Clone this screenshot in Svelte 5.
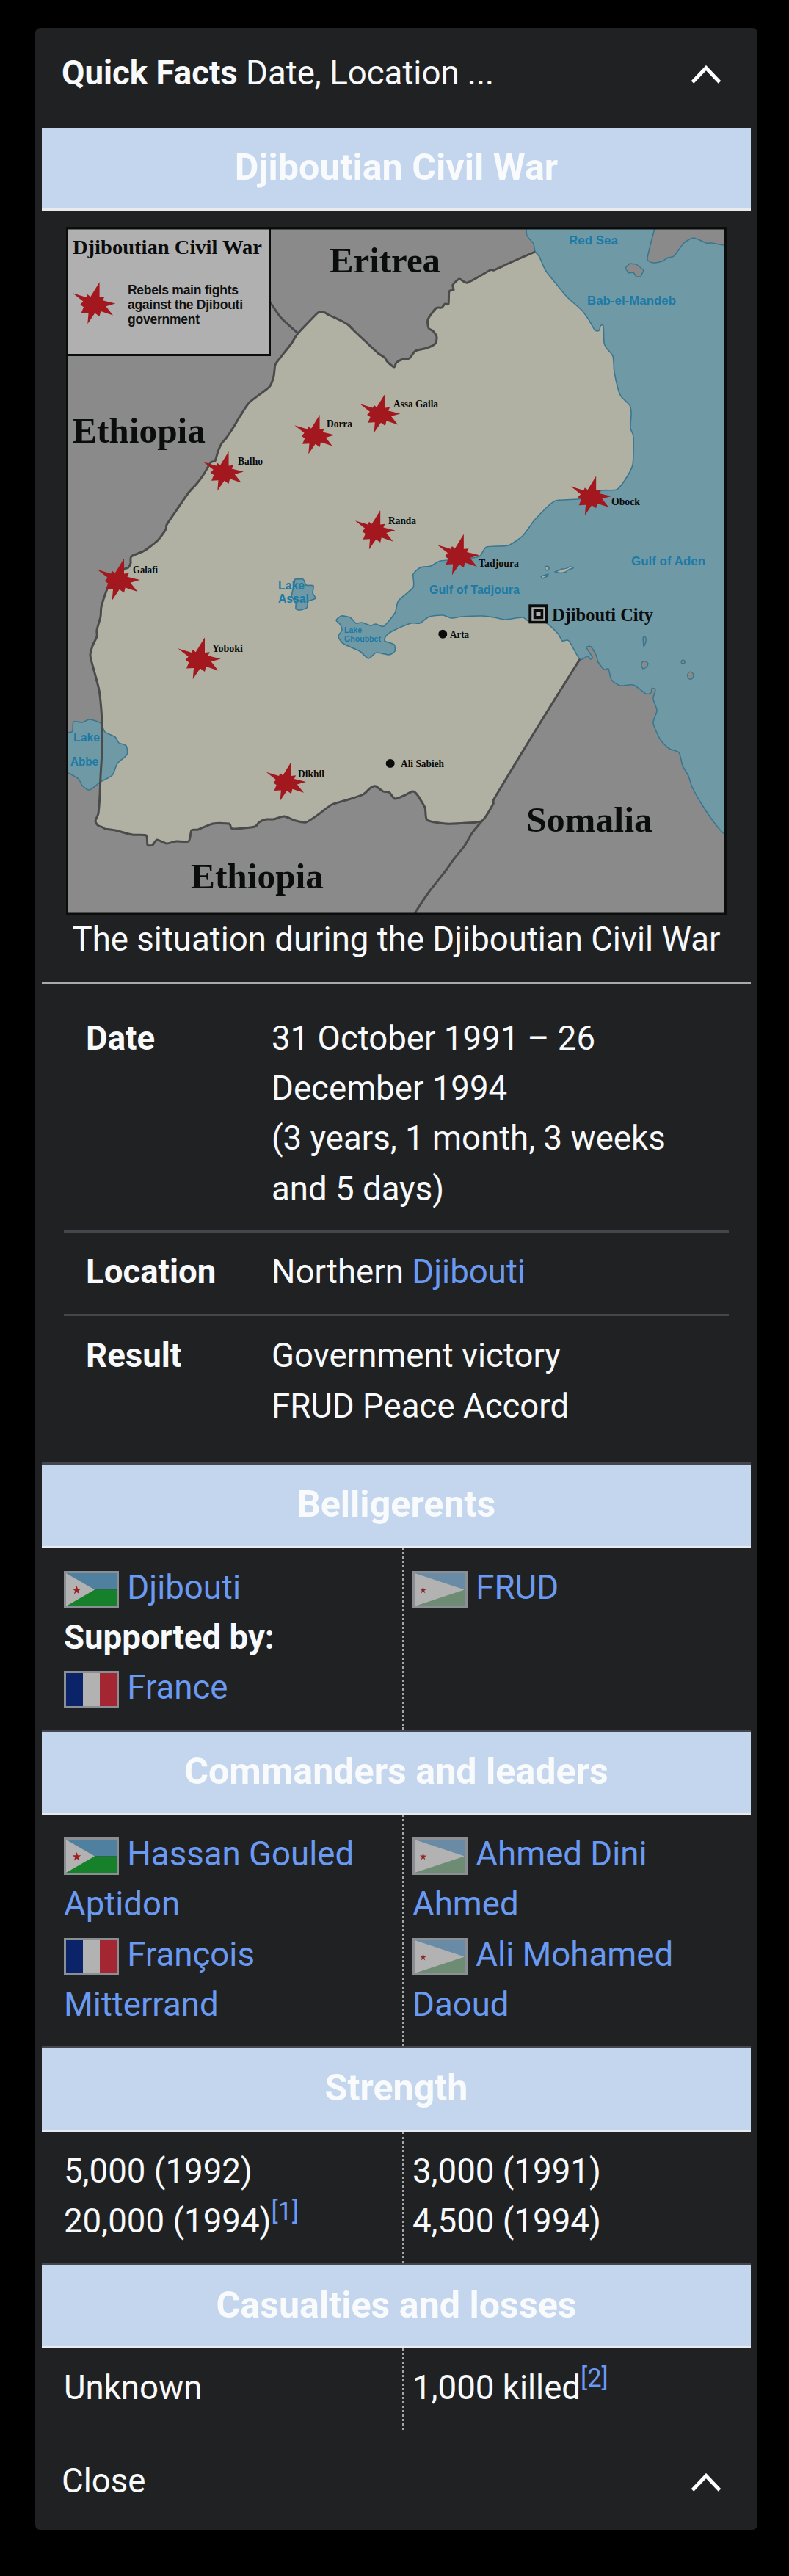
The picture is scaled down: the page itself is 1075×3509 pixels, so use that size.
<script>
  const belligerents = [
    [
      { flag: 'djibouti', link: 'Djibouti' },
      { bold: 'Supported by:' },
      { flag: 'france', link: 'France' }
    ],
    [{ flag: 'frud', link: 'FRUD' }]
  ];

  const commanders = [
    [
      { flag: 'djibouti', link: 'Hassan Gouled Aptidon' },
      { flag: 'france', link: 'François Mitterrand' }
    ],
    [
      { flag: 'frud', link: 'Ahmed Dini Ahmed' },
      { flag: 'frud', link: 'Ali Mohamed Daoud' }
    ]
  ];

  const strength = [
    [{ text: '5,000 (1992)' }, { text: '20,000 (1994)', ref: '[1]' }],
    [{ text: '3,000 (1991)' }, { text: '4,500 (1994)' }]
  ];

  const losses = [[{ text: 'Unknown' }], [{ text: '1,000 killed', ref: '[2]' }]];

  const sections = [
    { title: 'Belligerents', columns: belligerents },
    { title: 'Commanders and leaders', columns: commanders },
    { title: 'Strength', columns: strength },
    { title: 'Casualties and losses', columns: losses }
  ];

  // map outlines, as "x,y x,y ..." lists
  const northBorder =
    '142,1129 140,1127 133,1124 130,1118 134,1108 136,1083 137,1057 139,1023 139,990 138,967 135,940 128,913 123,893 126,880 132,867 132,858 137,840 138,827 145,805 154,785 170,775 175,773 178,767 179,758 197,750 215,736 226,721 227,715 237,700 257,671 268,659 277,647 287,630 293,628 297,615 302,604 308,597 318,582 327,567 340,548 367,527 373,512 375,497 382,487 397,468 406,454 432,427 437,425 443,426 448,429 465,437 475,443 485,453 500,467 515,481 524,487 528,493 537,500 540,494 549,489 558,488 566,478 582,474 593,468 595,459 590,451 584,447 583,435 594,420 602,419 606,414 611,414 612,397 618,395 617,388 626,380 637,385 668,368 673,368 697,357 729,343';
  const southBorder =
    '790,898 732,991 675,1085 672,1095 657,1118 635,1121 607,1122 582,1117 579,1100 568,1082 562,1078 550,1084 538,1088 530,1079 522,1078 512,1071 505,1073 495,1082 475,1089 452,1096 433,1110 417,1120 403,1118 387,1112 373,1116 363,1116 353,1120 347,1126 317,1129 312,1122 290,1122 270,1130 261,1131 257,1146 240,1146 227,1149 214,1144 208,1151 201,1151 199,1138 180,1137 157,1131 142,1129';
  const somaliBorder = '657,1118 643,1135 633,1152 617,1172 608,1185 583,1217 565,1244';
  const eritreaBorder = '367,410 383,433 406,454';
  const sea =
    '729,343 735,350 743,368 758,387 773,405 793,423 803,437 810,449 814,451 817,449 818,444 822,444 823,467 826,474 835,485 837,507 843,533 847,541 858,552 860,563 859,583 863,595 862,633 852,653 840,667 820,668 807,677 787,680 757,682 743,693 727,710 712,730 692,743 663,745 653,758 627,762 600,764 587,771 573,773 563,782 563,800 543,818 538,835 523,853 512,850 505,852 493,848 485,849 477,841 465,839 458,845 463,850 466,858 461,867 468,877 490,887 502,897 513,889 530,892 538,887 537,878 524,873 527,865 540,857 560,849 572,849 585,840 603,838 615,842 630,840 657,839 673,841 688,844 712,841 720,846 743,848 760,863 766,873 775,873 790,898 800,894 805,898 807,895 799,882 805,881 812,892 815,902 823,912 829,911 833,926 845,934 863,933 880,945 887,944 888,938 893,939 890,952 895,968 890,985 900,1008 912,1020 925,1025 930,1043 938,1057 943,1072 957,1097 975,1123 989,1137 1020,1137 1020,334 987,334 970,331 962,331 945,324 932,331 918,349 910,351 902,356 890,358 882,353 887,330 892,310 892,290 717,290 717,310 718,321 727,332';
  const lakeAbbe =
    '80,998 98,997 100,983 112,984 122,980 137,985 143,997 157,1004 162,1012 172,1016 173,1028 160,1040 153,1056 137,1065 122,1076 112,1070 107,1061 93,1053 80,1050';
  const lakeAssal =
    '402,789 413,789 417,797 427,798 426,808 430,815 420,819 418,828 408,831 403,829 403,822 397,812';

  const countries = [
    ['Eritrea', 449, 371, 151],
    ['Ethiopia', 99, 603, 181],
    ['Ethiopia', 260, 1210, 181],
    ['Somalia', 717, 1133, 172]
  ];

  const waters = [
    ['Red Sea', 775, 333, 67, 17],
    ['Bab-el-Mandeb', 800, 415, 121, 17],
    ['Gulf of Aden', 860, 770, 101, 17],
    ['Gulf of Tadjoura', 585, 809, 123, 16],
    ['Lake', 379, 803, 36, 16],
    ['Assal', 379, 821, 42, 16],
    ['Lake', 469, 862, 24, 10],
    ['Ghoubbet', 469, 874, 50, 10],
    ['Lake', 100, 1010, 36, 16],
    ['Abbe', 96, 1043, 38, 16]
  ];

  const towns = [
    ['Assa Gaila', 536, 555, 61],
    ['Dorra', 445, 582, 35],
    ['Balho', 324, 633, 34],
    ['Randa', 529, 714, 38],
    ['Galafi', 181, 781, 34],
    ['Yoboki', 289, 888, 42],
    ['Dikhil', 406, 1059, 36],
    ['Obock', 833, 688, 39],
    ['Tadjoura', 652, 772, 55],
    ['Arta', 613, 869, 26],
    ['Ali Sabieh', 546, 1045, 59]
  ];

  const fights = [
    [128.3, 413.3, 1],
    [428.7, 592.3, 0.94],
    [518, 563.3, 0.94],
    [304.7, 642.3, 0.94],
    [511.3, 722.3, 0.94],
    [161.7, 789.7, 1],
    [271.7, 897.3, 1],
    [390, 1064.7, 0.93],
    [805.3, 675.7, 0.94],
    [624.7, 756, 0.98]
  ];

  // smooth line through every point of the list
  function curve(list) {
    const p = list.split(' ').map(s => s.split(',').map(Number));
    let d = `M${p[0]}`;
    for (let i = 0; i < p.length - 1; i++) {
      const a = p[i - 1] || p[i];
      const b = p[i];
      const c = p[i + 1];
      const e = p[i + 2] || c;
      d += `C${b[0] + (c[0] - a[0]) / 9},${b[1] + (c[1] - a[1]) / 9} ${c[0] - (e[0] - b[0]) / 9},${c[1] - (e[1] - b[1]) / 9} ${c}`;
    }
    return d;
  }
</script>

{#snippet chevron()}
  <svg class="chevron" viewBox="0 0 42 26" width="42" height="26">
    <path d="M2.5 23 L21 3.5 L39.5 23" />
  </svg>
{/snippet}

{#snippet flagIcon(name)}
  <svg class="flag" viewBox="0 0 69 45" preserveAspectRatio="none">
    {#if name === 'france'}
      <path fill="#0a2369" d="M0 0h23v45H0z" />
      <path fill="#b2b2b2" d="M23 0h23v45H23z" />
      <path fill="#a32632" d="M46 0h23v45H46z" />
    {:else if name === 'djibouti'}
      <path fill="#5080a0" d="M0 0h69v22.5H0z" />
      <path fill="#17802a" d="M0 22.5h69V45H0z" />
      <path fill="#b2b2b2" d="M0 0L39 22.5L0 45z" />
      <path fill="#a11d22" d="M14.5 17l1.5 4.3h4.3l-3.5 2.7 1.4 4.5-3.7-2.8-3.7 2.8 1.4-4.5-3.5-2.7h4.3z" />
    {:else}
      <path fill="#698ba6" d="M0 0h69v22.5H0z" />
      <path fill="#6d8c73" d="M0 22.5h69V45H0z" />
      <path fill="#b2b2b2" d="M0 0L68 22.5L0 45z" />
      <path fill="#8f2a2a" d="M11.5 18l1.1 3.5h3.5l-2.9 2.2 1.2 3.7-2.9-2.3-2.9 2.3 1.2-3.7-2.9-2.2h3.5z" />
    {/if}
  </svg>
{/snippet}

<main>
  <header class="toggle">
    <span><b>Quick Facts</b> Date, Location ...</span>
    {@render chevron()}
  </header>

  <h2 class="first">Djiboutian Civil War</h2>

  <figure>
    <svg class="map" viewBox="90 309 900 938">
      <rect x="90" y="309" width="900" height="938" fill="#8a8a8a" />
      <path class="land" d={curve(northBorder) + 'L880 500L880 680L790 898' + curve(southBorder).replace('M', 'L') + 'Z'} />
      <path class="water" d={curve(sea) + 'Z'} />
      <path class="water" d={curve(lakeAbbe) + 'Z'} />
      <path class="water" d={curve(lakeAssal) + 'Z'} />
      <path class="border" d={curve(northBorder)} />
      <path class="border" d={curve(southBorder)} />
      <path class="border" d={curve(somaliBorder)} />
      <path class="border" d={curve(eritreaBorder)} />

      <g class="island">
        <path d="M852 365L858 359L867 360L877 368L873 377L867 377L863 371L856 372Z" />
        <path d="M876 869q2-4 4 0q1 6-3 12z" />
        <path d="M874 903q5-5 9 1q-1 6-7 7q-3-4-2-8z" />
        <circle cx="930.7" cy="901.7" r="2.4" />
        <ellipse cx="940.7" cy="920.3" rx="4" ry="5" />
      </g>
      <g class="island pale">
        <circle cx="745.3" cy="774" r="2.7" />
        <path d="M737 785l10-3l-1 3l-7 3z" />
        <path d="M756 779q6-2 10-4q6 0 10-3q6 0 5 2q-6 1-10 5q-6 3-15 0z" />
      </g>

      <rect x="91.5" y="310.5" width="276" height="173" fill="#b0b0b0" stroke="#0b0c0c" stroke-width="3" />
      <text class="serif" x="99" y="346" font-size="28" textLength="258" lengthAdjust="spacingAndGlyphs">Djiboutian Civil War</text>
      <g class="legend">
        <text x="174" y="401" textLength="151">Rebels main fights</text>
        <text x="174" y="421" textLength="157">against the Djibouti</text>
        <text x="174" y="441" textLength="98">government</text>
      </g>

      {#each fights as [x, y, k]}
        <path
          class="fight"
          transform="translate({x} {y}) scale({k})"
          d="M7.3-29L7.3-8.3L14-9L11.7-4L29 .3L16 4L25.7 16.3L9 10.7L7.3 17.7L1 13.3L-9 28L-7.7 12.7L-17.7 13.3L-14.3 5L-19 1.7L-15-2.7L-29.3-14L-10.7-8.3L-9-12.3L-5-9Z"
        />
      {/each}

      {#each countries as [name, x, y, w]}
        <text class="serif" {x} {y} font-size="48" textLength={w} lengthAdjust="spacingAndGlyphs">{name}</text>
      {/each}
      {#each waters as [name, x, y, w, size]}
        <text class="sea-name" {x} {y} font-size={size} textLength={w} lengthAdjust="spacingAndGlyphs">{name}</text>
      {/each}
      {#each towns as [name, x, y, w]}
        <text class="serif" {x} {y} font-size="14" textLength={w} lengthAdjust="spacingAndGlyphs">{name}</text>
      {/each}

      <circle cx="603.3" cy="863.7" r="6" fill="#0b0c0c" />
      <circle cx="531.7" cy="1040" r="6" fill="#0b0c0c" />
      <rect x="720.3" y="823.3" width="26.4" height="26" fill="#0b0c0c" />
      <rect x="725.5" y="828.5" width="16" height="16" fill="none" stroke="#b0b0b0" stroke-width="2.5" />
      <rect x="730.5" y="834" width="6" height="5" fill="#b0b0b0" />
      <text class="serif" x="752" y="846" font-size="25" textLength="138" lengthAdjust="spacingAndGlyphs">Djibouti City</text>

      <path fill="#0b0c0c" fill-rule="evenodd" d="M90 309h900v938H90zM93 312.5v930h893.5v-930z" />
    </svg>
    <figcaption>The situation during the Djiboutian Civil War</figcaption>
  </figure>

  <dl>
    <div>
      <dt>Date</dt>
      <dd>31 October 1991 – 26 December 1994<br />(3 years, 1 month, 3 weeks and 5 days)</dd>
    </div>
    <div>
      <dt>Location</dt>
      <dd>Northern <span class="link">Djibouti</span></dd>
    </div>
    <div>
      <dt>Result</dt>
      <dd>Government victory<br />FRUD Peace Accord</dd>
    </div>
  </dl>

  {#each sections as section}
    <h2>{section.title}</h2>
    <div class="columns">
      {#each section.columns as column}
        <div class="column">
          {#each column as item}
            <p>
              {#if item.flag}{@render flagIcon(item.flag)} <span class="link">{item.link}</span>
              {:else if item.bold}<b>{item.bold}</b>
              {:else}{item.text}{#if item.ref}<sup>{item.ref}</sup>{/if}{/if}
            </p>
          {/each}
        </div>
      {/each}
    </div>
  {/each}

  <footer class="toggle">
    <span>Close</span>
    {@render chevron()}
  </footer>
</main>

<style>
  :global(body) {
    background: #000;
  }

  main {
    box-sizing: border-box;
    display: flow-root;
    width: 984px;
    height: 3408px;
    margin: 38px 0 0 48px;
    padding: 0 9px;
    background: #202123;
    border-radius: 7px;
    color: #f8f9fa;
    font-family: Roboto, sans-serif;
    font-size: 45.6px;
    line-height: 68.2px;
  }

  .toggle {
    display: flex;
    align-items: center;
    justify-content: space-between;
    height: 136px;
    box-sizing: border-box;
    padding: 0 40px 12px 27px;
  }

  .chevron {
    margin-top: 4px;
  }

  .chevron path {
    fill: none;
    stroke: #fff;
    stroke-width: 5;
  }

  h2 {
    box-sizing: border-box;
    height: 116.3px;
    margin: 0;
    padding-top: 20px;
    background: #c3d6ee;
    border-top: 3px solid #43464f;
    border-bottom: 3px solid #e8eaee;
    color: #f8fafc;
    font-size: 50.2px;
    font-weight: bold;
    text-align: center;
  }

  h2.first {
    height: 113px;
    border-top: 0;
  }

  figure {
    margin: 0;
    padding: 22px 0 22.8px;
    border-bottom: 3px solid #aaabad;
    text-align: center;
  }

  figcaption {
    margin: -1px -20px 0;
  }

  .map {
    display: block;
    width: 900px;
    height: 938px;
    margin: 0 auto;
  }

  .land {
    fill: #b0b1a3;
  }

  .water {
    fill: #7099a6;
    stroke: #397790;
    stroke-width: 1.6;
  }

  .border {
    fill: none;
    stroke: #4b4b4b;
    stroke-width: 3;
    stroke-linejoin: round;
  }

  .island {
    fill: #8a8a8a;
    stroke: #397790;
    stroke-width: 1.5;
    stroke-linejoin: round;
  }

  .pale {
    fill: #b0b1a3;
  }

  .fight {
    fill: #a3181e;
  }

  .serif {
    font-family: 'Liberation Serif', serif;
    font-weight: bold;
    fill: #0b0c0c;
  }

  .sea-name {
    font-family: 'Liberation Sans', sans-serif;
    font-weight: bold;
    fill: #1c7aa5;
  }

  .legend {
    font-family: 'Liberation Sans', sans-serif;
    font-size: 17.5px;
    font-weight: bold;
    fill: #101111;
  }

  dl {
    margin: 0;
    padding: 20.5px 30px 20px;
  }

  dl div {
    display: grid;
    grid-template-columns: 253px 1fr;
    padding: 20.4px 28px 22.4px 30px;
    border-bottom: 3px solid #45464c;
  }

  dl div:last-child {
    border: 0;
  }

  dt {
    font-weight: bold;
  }

  dd {
    margin: 0;
  }

  .link,
  sup {
    color: #6b9af2;
  }

  .columns {
    display: grid;
    grid-template-columns: 494px 1fr;
  }

  .column {
    padding: 20.2px 30px 22.4px;
    border-right: 3px dotted #a5a6a8;
  }

  .column:last-child {
    padding-left: 11px;
    border: 0;
  }

  p {
    margin: 0;
  }

  .flag {
    width: 69px;
    height: 45px;
    border: 3px solid #8b8f94;
    vertical-align: -13px;
  }

  sup {
    font-size: 34.5px;
    line-height: 0;
    vertical-align: 17px;
  }

  footer {
    margin-top: 8px;
  }
</style>
